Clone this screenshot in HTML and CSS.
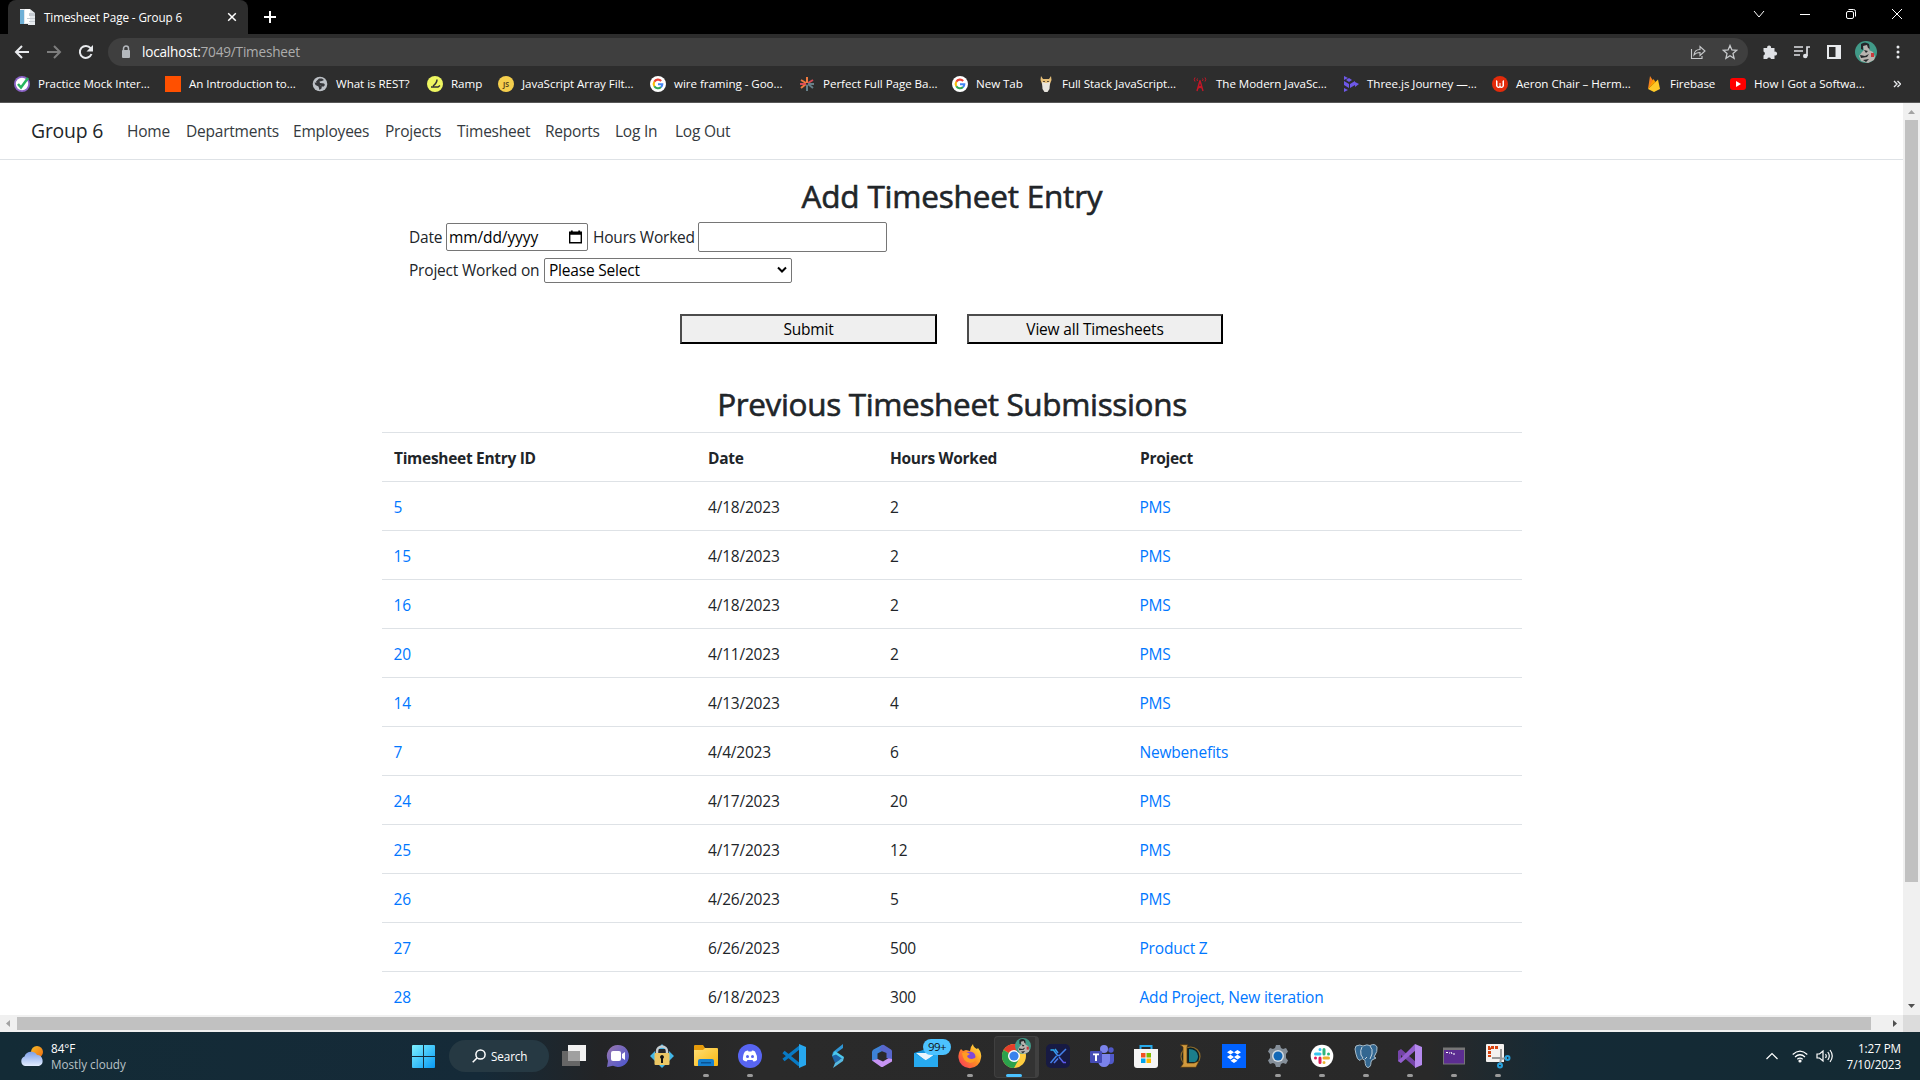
FILE: index.html
```html
<!DOCTYPE html>
<html lang="en">
<head>
<meta charset="utf-8">
<title>Timesheet Page - Group 6</title>
<link rel="stylesheet" href="styles.css">
</head>
<body>
<header class="tabstrip">
  <div class="tab">
    <svg class="i16" viewBox="0 0 16 16"><path fill="#e4e8ec" d="M0 0h10l5 4v12H8v-1H0z"/><path fill="#6fb0d6" d="M0 1h4v14H0z"/><path fill="#fff" d="M5 0h5v14H5z"/><path fill="#c5cbd2" d="M7 9h8v1H7zM9 12h6v1H9zM9 4h6v3H9z"/></svg>
    <span class="tab-title">Timesheet Page - Group 6</span>
    <svg class="close" viewBox="0 0 10 10"><path d="M1.2 1.2l7.6 7.6M8.8 1.2L1.2 8.8"/></svg>
  </div>
  <svg class="plus" viewBox="0 0 12 12"><path d="M6 0v12M0 6h12"/></svg>
  <div class="window-controls">
    <svg viewBox="0 0 12 12"><path d="M1 3l5 6 5-6"/></svg>
    <svg viewBox="0 0 12 12"><path d="M1 6.500h10"/></svg>
    <svg viewBox="0 0 12 12"><rect x="1.500" y="3.500" width="7" height="7" rx="1.500"/><path d="M3.500 1.500h5q2 0 2 2v5"/></svg>
    <svg viewBox="0 0 12 12"><path d="M1 1l10 10M11 1L1 11"/></svg>
  </div>
</header>
<div class="toolbar">
  <svg class="nav-icon" viewBox="0 0 16 16"><path d="M15 8H2M8 2L2 8l6 6"/></svg>
  <svg class="nav-icon dim" viewBox="0 0 16 16"><path d="M1 8h13M8 2l6 6-6 6"/></svg>
  <svg class="nav-icon" viewBox="0 0 16 16"><path d="M13.500 10A6 6 0 1 1 12.600 4.200L14 5.600"/><path class="solid" d="M15 1v6.500H8.500z"/></svg>
  <div class="omnibox">
    <svg class="lock" viewBox="0 0 10 14"><path d="M2.500 6V3.500a2.500 2.500 0 0 1 5 0V6" fill="none" stroke="#b4b8bd" stroke-width="1.500"/><rect x="1" y="5" width="8" height="8" rx="1" fill="#b4b8bd"/></svg>
    <span class="url"><b>localhost:</b>7049/Timesheet</span>
    <svg class="omni-icon thin" viewBox="0 0 16 16"><path d="M1.500 5v9.500H12V12M4 11q.5-5.500 6-5.500V2.500L15 7l-5 4.500V8.500Q6 8.500 4 11z"/></svg>
    <svg class="omni-icon" viewBox="0 0 16 16"><path d="M8 1.500l1.900 4.500 4.700.4-3.600 3.200 1.100 4.700L8 11.800l-4.100 2.500L5 9.600 1.400 6.400 6.100 6z"/></svg>
  </div>
  <div class="extensions">
    <svg viewBox="0 0 16 16"><path fill="#dfe1e5" d="M2 4h3.200a2 2 0 1 1 3.800 0h3.500v3.700a2 2 0 1 1 0 3.800V15H9a2 2 0 0 0-3.800 0H1.500v-3.600a2 2 0 0 0 0-3.800V4z"/></svg>
    <svg viewBox="0 0 16 16"><path d="M0 3h9M0 7h9M0 11h6M13 12V3h3" fill="none" stroke="#dfe1e5" stroke-width="1.700"/><circle cx="11.300" cy="12" r="2.300" fill="#dfe1e5"/></svg>
    <svg viewBox="0 0 16 16"><path fill="#e8eaed" d="M1 1h14v14H1zM3 3v10h6.500V3z" fill-rule="evenodd"/></svg>
    <svg class="avatar" viewBox="0 0 22 22"><use href="#face"/></svg>
    <svg viewBox="0 0 16 16"><g fill="#e8eaed"><circle cx="8" cy="3" r="1.500"/><circle cx="8" cy="8" r="1.500"/><circle cx="8" cy="13" r="1.500"/></g></svg>
  </div>
</div>
<nav class="bookmarks">
  <a><svg class="i16" viewBox="0 0 16 16"><circle cx="8" cy="8" r="8" fill="#8b63c7"/><circle cx="8" cy="8" r="6.200" fill="#fff"/><path d="M4 8l3 3.500L14 2" fill="none" stroke="#27b55f" stroke-width="2.500"/></svg>Practice Mock Inter...</a>
  <a><svg class="i16" viewBox="0 0 16 16"><path fill="#ff5000" d="M0 0h16v16H0z"/></svg>An Introduction to...</a>
  <a><svg class="i16" viewBox="0 0 16 16"><circle cx="8" cy="8" r="7.300" fill="#bdc1c6"/><path fill="#36373a" d="M2.500 6.500l4 .5 1 2 2.500.5-.5 3-2 1.500-1-3.500-3-1.500zM7 2.500h3l2 1.500-2 1-2.500.5.500 1.500 4 .5 1 1.500-2 2-2-2-3.500-.5-1.500-3z"/></svg>What is REST?</a>
  <a><svg class="i16" viewBox="0 0 16 16"><circle cx="8" cy="8" r="8" fill="#eef661"/><path d="M10 3.500Q10 7 6 10M4 11h7l2-1.500" fill="none" stroke="#333" stroke-width="1.500"/></svg>Ramp</a>
  <a><svg class="i16" viewBox="0 0 16 16"><circle cx="8" cy="8" r="8" fill="#f5cf4d"/><text x="8" y="11" class="js">JS</text></svg>JavaScript Array Filt...</a>
  <a><svg class="i16" viewBox="0 0 16 16"><use href="#google"/></svg>wire framing - Goo...</a>
  <a><svg class="i16" viewBox="0 0 16 16"><path d="M8 1v6M2 4l5 3M2 12l5-4" stroke="#f07b3f" stroke-width="2"/><path d="M14 4L9 7M1 8h6" stroke="#d94c57" stroke-width="2"/><path d="M8 9v6M9 8l5 4M9 8h6" stroke="#667f88" stroke-width="2"/></svg>Perfect Full Page Ba...</a>
  <a><svg class="i16" viewBox="0 0 16 16"><use href="#google"/></svg>New Tab</a>
  <a><svg class="i16" viewBox="0 0 16 16"><path fill="#e6bf79" d="M3 0l2 3h6l2-3 .5 4-1.500 4-1 2H5L4 8 2.500 4z"/><path fill="#e8e5df" d="M4 6l4 1 4-1-.5 7-2 3h-3l-2-3z"/><path fill="#5d4c35" d="M5 5h2v1H5zM9 5h2v1H9z"/></svg>Full Stack JavaScript...</a>
  <a><svg class="i16" viewBox="0 0 16 16"><g fill="none" stroke="#c51627"><path d="M8 4.500L5 15M8 4.500L11 15M6 12l4-2M6.500 10l3 2" stroke-width="1.400"/><path d="M3 1.500q-1.500 2 0 4M13 1.500q1.500 2 0 4M5.500 2.500q-1 1 0 2.500M10.500 2.500q1 1 0 2.500"/></g></svg>The Modern JavaSc...</a>
  <a><svg class="i16" viewBox="0 0 16 16"><path fill="#6e58e8" d="M1 0l4 2-4 2zM6 2l3 2-3 2-3-2zM1 5l5 3v4l-5-3zM7 8l5-3v4l-5 3zM12 6l4 2-4 3zM1 12l4 2-4 2z"/></svg>Three.js Journey —...</a>
  <a><svg class="i16" viewBox="0 0 16 16"><circle cx="8" cy="8" r="8" fill="#e22b0b"/><path fill="#fff" d="M4 4l1.500 1v5q1 1.500 2 0V7h1v3q1 1.500 2 0V5L12 4v6q-1.500 3-4 1.500Q5.500 13 4 10z"/></svg>Aeron Chair – Herm...</a>
  <a><svg class="i16" viewBox="0 0 16 16"><path fill="#f58220" d="M2 13L4 0l4 6z"/><path fill="#ffca28" d="M2 13l10-9.500L14 13l-6 3z"/><path fill="#ffa000" d="M2 13l5.500-10L9.500 6z"/></svg>Firebase</a>
  <a><svg class="i16" viewBox="0 0 16 16"><rect y="2" width="16" height="12" rx="3" fill="#f00"/><path fill="#fff" d="M6 5l5 3-5 3z"/></svg>How I Got a Softwa...</a>
  <svg class="more" viewBox="0 0 8 8"><path d="M1 1l3 3-3 3M4.500 1l3 3-3 3"/></svg>
</nav>
<div class="viewport">
  <main class="page">
    <nav class="navbar">
      <a class="brand">Group 6</a><a>Home</a><a>Departments</a><a>Employees</a><a>Projects</a><a>Timesheet</a><a>Reports</a><a>Log In</a><a>Log Out</a>
    </nav>
    <div class="container">
      <h1>Add Timesheet Entry</h1>
      <form class="entry">
        <div class="form-row first">
          <label class="l-date">Date</label>
          <div class="date-box"><span>mm/dd/yyyy</span><svg viewBox="0 0 14 14"><path fill="#000" d="M2 0h2v1h6V0h2v1h2v13H0V1h2zM1.500 4.500v8h11v-8z" fill-rule="evenodd"/></svg></div>
          <label class="l-hours">Hours Worked</label>
          <input class="hours" type="text">
        </div>
        <div class="form-row second">
          <label class="l-project">Project Worked on</label>
          <div class="select-box"><span>Please Select</span><svg viewBox="0 0 10 8"><path d="M1 1.500l4 4 4-4"/></svg></div>
        </div>
        <div class="buttons">
          <button type="button">Submit</button>
          <button type="button">View all Timesheets</button>
        </div>
      </form>
      <h1 class="previous">Previous Timesheet Submissions</h1>
      <div class="table">
        <div class="tr th"><span>Timesheet Entry ID</span><span>Date</span><span>Hours Worked</span><span>Project</span></div>
        <div class="tr"><a>5</a><span>4/18/2023</span><span>2</span><a>PMS</a></div>
        <div class="tr"><a>15</a><span>4/18/2023</span><span>2</span><a>PMS</a></div>
        <div class="tr"><a>16</a><span>4/18/2023</span><span>2</span><a>PMS</a></div>
        <div class="tr"><a>20</a><span>4/11/2023</span><span>2</span><a>PMS</a></div>
        <div class="tr"><a>14</a><span>4/13/2023</span><span>4</span><a>PMS</a></div>
        <div class="tr"><a>7</a><span>4/4/2023</span><span>6</span><a>Newbenefits</a></div>
        <div class="tr"><a>24</a><span>4/17/2023</span><span>20</span><a>PMS</a></div>
        <div class="tr"><a>25</a><span>4/17/2023</span><span>12</span><a>PMS</a></div>
        <div class="tr"><a>26</a><span>4/26/2023</span><span>5</span><a>PMS</a></div>
        <div class="tr"><a>27</a><span>6/26/2023</span><span>500</span><a>Product Z</a></div>
        <div class="tr"><a>28</a><span>6/18/2023</span><span>300</span><a>Add Project, New iteration</a></div>
      </div>
    </div>
  </main>
  <div class="vscroll"><svg viewBox="0 0 17 17"><path fill="#a3a3a3" d="M5 11h7L8.500 7z"/></svg><i></i><svg viewBox="0 0 17 17"><path fill="#505050" d="M5 6h7l-3.500 4z"/></svg></div>
  <div class="hscroll"><svg viewBox="0 0 17 17"><path fill="#a3a3a3" d="M10 5v7L6 8.500z"/></svg><i></i><svg viewBox="0 0 17 17"><path fill="#505050" d="M7 5v7l4-3.500z"/></svg></div>
  <div class="corner"></div>
</div>
<footer class="taskbar">
  <div class="weather">
    <svg viewBox="0 0 24 20"><circle cx="17" cy="6" r="6" fill="url(#sun)"/><path fill="url(#cloud)" d="M5 20a5 5 0 0 1-.5-9.500A7 7 0 0 1 17 9a5.700 5.700 0 0 1 2 11z"/></svg>
    <div><p>84°F</p><p class="muted">Mostly cloudy</p></div>
  </div>
  <div class="start"><svg viewBox="0 0 24 24"><path fill="url(#win)" d="M1 0h10.500v11.500H0V1q0-1 1-1zM12.500 0H23q1 0 1 1v10.500H12.500zM0 12.500h11.500V24H1q-1 0-1-1zM12.500 12.500H24V23q0 1-1 1H12.500z"/></svg></div>
  <div class="search"><svg viewBox="0 0 14 14"><circle cx="8.500" cy="5.500" r="4.600"/><path d="M5 9l-4.300 4.300"/></svg>Search</div>
  <div class="apps">
    <div class="app"><svg viewBox="0 0 24 24"><path fill="#f2f2f2" d="M6 1h18v16H6z"/><path fill="#666" d="M0 7h18v15H0z"/><path fill="#a0a0a0" d="M6 7h12v10H6z"/></svg></div>
    <div class="app"><svg viewBox="0 0 24 24"><path fill="url(#chat)" d="M12 1a11 11 0 1 1-5 20.800L1 23l1-6A11 11 0 0 1 12 1z"/><rect x="5" y="7" width="10" height="10" rx="2" fill="#fff"/><path fill="#fff" d="M16 10l3-2v8l-3-2z"/></svg></div>
    <div class="app"><svg viewBox="0 0 24 24"><path fill="#42b7e8" d="M12 0l4 5H8zM0 12l5-5v10zM24 12l-5-5v10zM12 24l-4-4h8z"/><path d="M7 12V7.500a5 5 0 0 1 10 0V12" fill="none" stroke="#c8ced1" stroke-width="2.500"/><rect x="4.500" y="9" width="15" height="12" rx="1" fill="#ecc764"/><path fill="#111" d="M12 11a2 2 0 0 1 1 3.700V19h-2v-4.300A2 2 0 0 1 12 11z"/></svg></div>
    <div class="app run"><svg viewBox="0 0 24 24"><path fill="#e59b0b" d="M0 2q0-1 1-1h8l2 3v5H0z"/><path fill="url(#folder)" d="M0 6h9l2-2h12q1 0 1 1v16q0 1-1 1H1q-1 0-1-1z"/><path fill="#1580d0" d="M4 22v-5q0-2 2-2h12q2 0 2 2v5z"/><path fill="#0a5394" d="M7 18h10v1.500H7z"/></svg></div>
    <div class="app run"><svg viewBox="0 0 24 24"><circle cx="12" cy="12" r="12" fill="#5865f2"/><path fill="#fff" d="M7 7.500q2-1 3-1l.5 1h3l.5-1q2 0 3 1 2.500 4 2 8.500-2 1.500-3.500 1.500l-1-1.500h-5l-1 1.500Q6.500 17 5 16q-.5-5 2-8.500z"/><circle cx="9.500" cy="12.500" r="1.500" fill="#5865f2"/><circle cx="14.500" cy="12.500" r="1.500" fill="#5865f2"/></svg></div>
    <div class="app"><svg viewBox="0 0 24 24"><path d="M1.500 8l16 13M1.500 16L18 3" stroke="#087ac4" stroke-width="3.500"/><path fill="#27a7ee" d="M17 0l7 3v18l-7 3z"/></svg></div>
    <div class="app"><svg viewBox="0 0 24 24"><path fill="#2f95d4" d="M17 0L7 8l-1 4 11-8z"/><path fill="#4cc9ee" d="M6 12l3-5 9 6-2 4z"/><path fill="#1d63a8" d="M6 12l4-1.500 6 4L9 19z"/><path fill="#58b9e0" d="M18 13l-1 4-10 7 2-5z"/></svg></div>
    <div class="app"><svg viewBox="0 0 24 24"><path fill="#3d83d6" d="M12 1L3.500 5.500Q2 6.500 2 8v9l5.500-2V9.500L16 5z"/><path fill="#c794f4" d="M2 16.500l8.500 6q1.500 1 3 0l8.500-5V12l-9 5.500L7.500 15z"/><path fill="#5867cc" d="M12 1q1-.5 2 0l7 4.500q1 .5 1 2V15l-5.500-1V9L9 6z"/></svg></div>
    <div class="app"><svg viewBox="0 0 24 24"><path fill="#1593da" d="M0 9l12-4 12 4v14H0z"/><path fill="#e9f5fc" d="M2 9h20l-10 8z"/><path fill="#27aaf0" d="M0 9l13 8L0 23zM24 9v14H0z"/></svg><em>99+</em></div>
    <div class="app run"><svg viewBox="0 0 24 24"><path fill="url(#fire)" d="M3 5l2 2 3-1 4 1Q12 3 15 0q0 3 4 5l1-1q4 5 3 10a11.300 11.300 0 0 1-22.500 0Q0 9 3 5z"/><circle cx="12" cy="13" r="5.500" fill="#8048d8"/><path fill="#ff9c22" d="M4 9q4-2 8 1l-3 2q1 3 5 3 3 0 5-3-1 7-7 7-7-1-8-10z"/></svg></div>
    <div class="app active"><svg viewBox="0 0 24 24"><use href="#chrome"/></svg><svg class="profile" viewBox="0 0 22 22"><use href="#face"/></svg></div>
    <div class="app"><svg viewBox="0 0 24 24"><rect width="24" height="24" rx="5" fill="#171a43"/><path d="M4.500 6h3l4 5.500h2L20 5M4.500 19l6-7M20 18.500h-2.500L13 13M8 19l4-4.500M12 9l-3-4" fill="none" stroke="url(#xg)" stroke-width="1.500"/></svg></div>
    <div class="app"><svg viewBox="0 0 24 24"><circle cx="14" cy="5" r="4" fill="#7b83eb"/><circle cx="21" cy="6" r="2.700" fill="#5059c9"/><path fill="#5059c9" d="M17 10h7v7q-1 4-5 3z"/><path fill="#7b83eb" d="M8 10h12v7q-1 6-6 6t-6-6z"/><rect y="7" width="12" height="12" rx="1" fill="#454bb5"/><path fill="#fff" d="M3 9.500h6v1.700H7V17H5v-5.800H3z"/></svg></div>
    <div class="app"><svg viewBox="0 0 24 24"><path d="M6.500 6V2h11v4" fill="none" stroke="#27a9ea" stroke-width="2"/><path fill="#f5f5f5" d="M0 5h24v16q0 3-3 3H3q-3 0-3-3z"/><path fill="#f25022" d="M7 9h4.500v4.500H7z"/><path fill="#7fba00" d="M12.500 9H17v4.500h-4.500z"/><path fill="#00a4ef" d="M7 14.500h4.500V19H7z"/><path fill="#ffb900" d="M12.500 14.500H17V19h-4.500z"/></svg></div>
    <div class="app"><svg viewBox="0 0 24 24"><circle cx="12.500" cy="12.500" r="9.500" fill="#0a2027" stroke="#8d6b2c" stroke-width="1.200"/><path fill="#1b7f8b" d="M11 5q8 0 9 7 0 4-3 6h-6z"/><path fill="#d29a3d" stroke="#4c3310" stroke-width=".7" d="M2 .7h8L9 3v16h7l5-2-3 6.300H2.500L5 20V3z"/></svg></div>
    <div class="app"><svg viewBox="0 0 24 24"><path fill="#0062ff" d="M0 0h24v24H0z"/><path fill="#fff" d="M8.500 6l3.500 2.300-3.500 2.300L5 8.300zM15.500 6L19 8.300l-3.500 2.300L12 8.300zM8.500 10.800l3.500 2.300-3.500 2.300L5 13.100zM15.500 10.800l3.500 2.300-3.500 2.300-3.500-2.300zM12 14.500l3.500 2.200L12 19l-3.500-2.300z"/></svg></div>
    <div class="app run"><svg viewBox="0 0 24 24"><path fill="#858f99" d="M9 4l1-3h4l1 3 2 1 3-1 2 3.500-2 2.500v4l2 2.500-2 3.500-3-1-2 1-1 3h-4l-1-3-2-1-3 1-2-3.500L4 14v-4L2 7.500 4 4l3 1z"/><circle cx="12" cy="12" r="6" fill="#d4dce3"/><circle cx="12" cy="12" r="4.500" fill="#1267b5"/></svg></div>
    <div class="app run"><svg viewBox="0 0 24 24"><circle cx="12" cy="12" r="11.300" fill="#fff"/><g fill="none" stroke-width="3" stroke-linecap="round"><path stroke="#36c5f0" d="M10 5.500v.1M5.500 10H10"/><path stroke="#2eb67d" d="M14 5.500V10M18.500 10v.1"/><path stroke="#ecb22e" d="M14 14h4.500M14 18.500v.1"/><path stroke="#e01e5a" d="M10 14v4.500M5.500 14v.1"/></g></svg></div>
    <div class="app run"><svg viewBox="0 0 24 24"><path fill="#336791" stroke="#a9bdca" d="M2 2q4-2 7 0 4-2 7-.5Q21-1 23 3q1 4-3 10l2 1-4 2-1 2q0 5-3 5.500-3-.5-3-7l-3-2-2 2Q3 16 2 10 0 4 2 2z"/><path fill="none" stroke="#c6d5df" d="M8 3q-2 3-1 8l2 3M16 2q3 3 2 8l-2 5M11 15l2-2"/></svg></div>
    <div class="app run"><svg viewBox="0 0 24 24"><path fill="#7544a9" d="M0 7l3-2 15 13v6L3 11v8l-3-2z"/><path fill="#9460cf" d="M17 0l1 6L3 19l-3-2z"/><path fill="#b68aee" d="M17 0l7 3v18l-7 3z"/></svg></div>
    <div class="app run"><svg viewBox="0 0 24 24"><path fill="#777" d="M1 3.500h22v17H1z"/><path fill="#5c2d91" d="M2 6h20v13.500H2z"/><path d="M4 8.500h2M7 9h1M9 8l1 2M11 10h2" stroke="#fff"/></svg></div>
    <div class="app run"><svg viewBox="0 0 24 24"><path fill="#f4f1ef" d="M0 1q0-1 1-1h16q1 0 1 1v17H1q-1 0-1-1z"/><path d="M12 3.500H3.500V13" fill="none" stroke="#d8420e" stroke-width="3" stroke-dasharray="3 1"/><path d="M6 14h9V5M14 15l7-1M15 14l-1 7" fill="none" stroke="#999" stroke-width="2"/><g fill="none" stroke="#25a0dd" stroke-width="2"><circle cx="21.500" cy="14" r="2"/><circle cx="14" cy="21.500" r="2"/></g></svg></div>
  </div>
  <div class="tray">
    <svg class="caret" viewBox="0 0 12 8"><path d="M.5 7L6 1.500 11.500 7"/></svg>
    <svg class="wifi" viewBox="0 0 16 13"><path d="M.7 4.500Q8-2.200 15.300 4.500M3 7Q8 2.500 13 7M5.300 9.300Q8 7 10.700 9.300"/><circle cx="8" cy="11" r="1" fill="#fff"/></svg>
    <svg class="sound" viewBox="0 0 17 14"><path d="M1 5h2.500L7 2v10L3.500 9H1zM9.500 5q1.500 2 0 4M11.800 3q3 4 0 8M14 1q4.500 6 0 12"/></svg>
    <div class="clock"><p>1:27 PM</p><p>7/10/2023</p></div>
  </div>
</footer>
<svg class="defs" width="0" height="0">
  <defs>
    <g id="face"><circle cx="11" cy="11" r="11" fill="#419a88"/><path fill="#b9b4b0" d="M8 4l5-1 2 4-1 2 4 2 2 5-1 3-6 3-7-2-2-5 3-4 2-2z"/><path fill="#24282b" d="M6 3q4-3 8 0l1 5-2-1-1-3-4 1v4l-2-1zM9 9l4 1-2 2zM5 14l5 1 4-2-2 3-6 1zM8 19l6-1-3 3z"/><path fill="#c9383c" d="M16 12h3v4h-3z"/></g>
    <g id="google"><circle cx="8" cy="8" r="8" fill="#fff"/><g fill="none" stroke-width="2.100"><path stroke="#ea4335" d="M4.300 5.800A4.300 4.300 0 0 1 11.200 5"/><path stroke="#fbbc05" d="M4.300 10.200a4.300 4.300 0 0 1 0-4.400"/><path stroke="#34a853" d="M11 11.100a4.300 4.300 0 0 1-6.700-.9"/><path stroke="#4285f4" d="M8 8.300h4.300q0 1.800-1.300 2.800"/></g></g>
    <g id="chrome"><circle cx="12" cy="12" r="12" fill="#ffcd40"/><path fill="#e43e2b" d="M12 12L1.600 6A12 12 0 0 1 22.400 6z"/><path fill="#2ba24c" d="M1.600 6a12 12 0 0 0 10.400 18l5-9-5-3z"/><circle cx="12" cy="12" r="6" fill="#fff"/><circle cx="12" cy="12" r="4.600" fill="#3a82ed"/></g>
    <linearGradient id="sun" x2="1" y2="1"><stop stop-color="#f8bd27"/><stop offset="1" stop-color="#ee6c13"/></linearGradient>
    <linearGradient id="cloud" x2="0" y2="1"><stop stop-color="#7c9fe9"/><stop offset="1" stop-color="#e3edff"/></linearGradient>
    <linearGradient id="win" x2="1" y2="1"><stop stop-color="#7cf0ff"/><stop offset="1" stop-color="#0899f4"/></linearGradient>
    <linearGradient id="chat" x2="1" y2="1"><stop stop-color="#9b78ae"/><stop offset="1" stop-color="#4854cf"/></linearGradient>
    <linearGradient id="folder" x2="1" y2="1"><stop stop-color="#ffdf75"/><stop offset="1" stop-color="#fab70f"/></linearGradient>
    <linearGradient id="fire" x1="1" x2="0" y2="1"><stop stop-color="#fff044"/><stop offset=".5" stop-color="#ff8b23"/><stop offset="1" stop-color="#f72d64"/></linearGradient>
    <linearGradient id="xg" x2="1" y2="1"><stop stop-color="#25b7ef"/><stop offset="1" stop-color="#624eea"/></linearGradient>
  </defs>
</svg>
</body>
</html>
```
FILE: styles.css
```css
* { box-sizing: border-box; }
body { margin: 0; width: 1920px; height: 1080px; overflow: hidden; background: #fff; color: #212529; font: 15.5px/24px "Open Sans", "Noto Sans", sans-serif; letter-spacing: -0.2px; display: flex; flex-direction: column; }
p { margin: 0; }
svg { display: block; flex: none; }
.defs { position: absolute; }
.i16 { width: 16px; height: 16px; }

.tabstrip { height: 34px; background: #000; display: flex; align-items: center; padding-left: 8px; flex: none; }
.tab { width: 240px; height: 34px; background: #2d2d2d; border-radius: 8px 8px 0 0; display: flex; align-items: center; padding: 0 11px 0 12px; color: #fff; font-size: 11.7px; letter-spacing: -0.1px; }
.tab-title { flex: 1; margin-left: 8px; white-space: nowrap; }
.close { width: 10px; height: 10px; stroke: #fff; stroke-width: 1.5; }
.plus { width: 12px; height: 12px; margin-left: 16px; stroke: #fff; stroke-width: 2; }
.window-controls { margin-left: auto; display: flex; gap: 34px; padding: 0 17px 6px 0; }
.window-controls svg { width: 12px; height: 12px; fill: none; stroke: #fff; stroke-width: 1; }

.toolbar { height: 35px; flex: none; background: #2d2d2d; display: flex; align-items: center; padding-left: 14px; }
.nav-icon { width: 16px; height: 16px; margin-right: 16px; fill: none; stroke: #e8eaed; stroke-width: 2; }
.nav-icon.dim { stroke: #7d7d7d; }
.nav-icon .solid { fill: #e8eaed; stroke: none; }
.omnibox { width: 1640px; height: 28px; margin-left: -2px; border-radius: 14px; background: #3f3f3f; display: flex; align-items: center; padding: 0 10px 0 13px; }
.lock { width: 10px; height: 14px; }
.url { flex: 1; margin-left: 11px; color: #adadad; font-size: 13.6px; letter-spacing: -0.2px; }
.url b { color: #fff; font-weight: 400; }
.omni-icon { width: 16px; height: 16px; margin-left: 16px; fill: none; stroke: #c8cacc; stroke-width: 1.3; }
.omni-icon.thin { stroke-width: 1.1; }
.extensions { flex: 1; display: flex; align-items: center; gap: 16px; padding-left: 14px; }
.extensions svg { width: 16px; height: 16px; }
.extensions .avatar { width: 22px; height: 22px; margin: 0 -3px; }

.bookmarks { height: 34px; flex: none; background: #2d2d2d; border-bottom: 1px solid #575757; display: grid; grid-template-columns: 151px 147px 115px 71px 152px 149px 153px 86px 154px 151px 149px 154px 84px 163px 8px; align-items: center; padding: 0 0 3px 14px; color: #fff; font-size: 11.6px; letter-spacing: -0.05px; }
.bookmarks a { display: flex; align-items: center; gap: 8px; white-space: nowrap; }
.more { width: 8px; height: 8px; fill: none; stroke: #e8eaed; stroke-width: 1.4; }
.js { font: bold 7px "Open Sans", sans-serif; fill: #5b4a1c; text-anchor: middle; letter-spacing: 0; }

.viewport { height: 929px; flex: none; display: grid; grid-template: 912px 17px / 1903px 17px; }
.page { overflow: hidden; }
.navbar { height: 57px; border-bottom: 1px solid #dee2e6; display: grid; grid-template-columns: 96px 59px 107px 92px 72px 88px 70px 60px 90px; align-items: center; padding: 0 0 1px 31px; color: #343a40; white-space: nowrap; letter-spacing: -0.22px; }
.navbar .brand { font-size: 19.4px; color: #212529; }
.container { width: 1140px; margin-left: 382px; }
h1 { margin: 0; padding-top: 16px; text-align: center; font-size: 31.5px; line-height: 40px; font-weight: 400; letter-spacing: -0.2px; -webkit-text-stroke: 0.6px #212529; }
.entry { padding-left: 27px; }
.form-row { display: flex; align-items: center; white-space: nowrap; }
.first { height: 32px; margin-top: 5px; padding-bottom: 1px; }
.second { height: 34px; }
.l-date { width: 37px; }
.date-box { width: 142px; height: 28px; border: 1px solid #767676; border-radius: 2px; display: flex; align-items: center; justify-content: space-between; padding: 0 5px 0 2px; color: #000; letter-spacing: -0.1px; }
.date-box svg { width: 13px; height: 14px; }
.l-hours { width: 105px; margin-left: 5px; }
.hours { width: 189px; height: 30px; border: 1px solid #767676; border-radius: 2px; }
.l-project { width: 135px; }
.select-box { width: 248px; height: 25px; border: 1px solid #767676; border-radius: 2px; display: flex; align-items: center; justify-content: space-between; padding: 0 4px; color: #000; }
.select-box svg { width: 10px; height: 8px; fill: none; stroke: #000; stroke-width: 2; }
.buttons { display: grid; grid-template-columns: 257px 256px; gap: 30px; padding: 27px 0 0 271px; }
button { height: 30px; padding: 0; border: 2px solid; border-color: #4c4c4c #000 #000 #4c4c4c; background: #efefef; color: #000; font: inherit; letter-spacing: inherit; }
h1.previous { padding-top: 40px; letter-spacing: -0.35px; }
.table { margin-top: 8px; }
.tr { height: 49px; border-top: 1px solid #dee2e6; display: grid; grid-template-columns: 314px 182px 250px 1fr; align-items: center; padding: 1px 0 0 12px; }
.tr a { color: #0077ff; margin-left: -0.5px; }
.th { font-weight: 700; letter-spacing: -0.3px; }
.vscroll { background: #f0f0f0; display: flex; flex-direction: column; justify-content: space-between; }
.vscroll svg, .hscroll svg { width: 17px; height: 17px; }
.vscroll i { width: 13px; height: 762px; margin: 0 2px auto; background: #c1c1c1; }
.hscroll { background: #f0f0f0; display: flex; align-items: center; }
.hscroll i { width: 1854px; height: 13px; margin-right: auto; background: #c1c1c1; }
.corner { background: #dcdcdc; }

.taskbar { height: 48px; flex: none; background: linear-gradient(90deg, #132b36 0, #152a38 480px, #232426 600px, #2a2a2a 760px, #292929 1430px, #142a36 1560px, #142a33 100%); color: #fff; display: flex; align-items: center; font-size: 11.7px; line-height: 16px; letter-spacing: 0; }
.weather { width: 412px; display: flex; align-items: center; gap: 7px; padding-left: 20px; }
.weather svg { width: 24px; height: 20px; }
.muted { color: #b9c1c6; }
.start { width: 37px; }
.start svg { width: 23px; height: 23px; }
.search { width: 100px; height: 32px; border-radius: 16px; background: #263943; display: flex; align-items: center; gap: 5px; padding-left: 23px; letter-spacing: -0.1px; }
.search svg { width: 14px; height: 14px; fill: none; stroke: #fff; stroke-width: 1.5; }
.apps { display: flex; margin-left: 3px; }
.app { position: relative; width: 44px; height: 48px; display: flex; align-items: center; justify-content: center; }
.app svg { width: 24px; height: 24px; overflow: visible; }
.app.run::after { content: ""; position: absolute; left: 19px; bottom: 3px; width: 6px; height: 3px; border-radius: 2px; background: #9a9a9a; }
.app.active::before { content: ""; position: absolute; left: 2px; top: 4px; width: 40px; height: 40px; border-radius: 4px; background: #333; border: 1px solid #404040; border-right-width: 4px; }
.app.active::after { content: ""; position: absolute; left: 14px; bottom: 3px; width: 16px; height: 3px; border-radius: 2px; background: #4cc2ff; }
.app.active svg { position: relative; }
.app.active .profile { position: absolute; width: 16px; height: 16px; left: 23px; top: 6px; }
.app em { position: absolute; left: 19px; top: 7px; width: 28px; height: 16px; border-radius: 8px; background: #4cc2ff; color: #111; font-style: normal; font-size: 11.5px; text-align: center; letter-spacing: -0.5px; }
.tray { margin-left: auto; display: flex; align-items: center; padding-right: 19px; }
.tray svg { fill: none; stroke: #fff; stroke-width: 1.2; }
.caret { width: 12px; height: 8px; margin-right: 14px; }
.wifi { width: 16px; height: 13px; margin-right: 8px; }
.sound { width: 17px; height: 14px; margin-right: 13px; }
.clock { text-align: right; width: 55px; white-space: nowrap; letter-spacing: -0.1px; }
```
